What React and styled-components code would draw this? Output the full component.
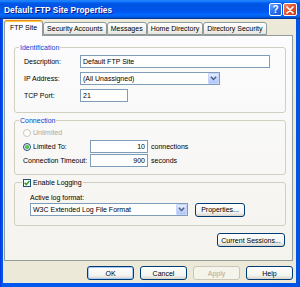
import React from 'react';
import styled, { createGlobalStyle } from 'styled-components';

const Global = createGlobalStyle`
  * { box-sizing: border-box; }
  html, body { margin: 0; padding: 0; width: 300px; height: 287px; overflow: hidden; background: #0054e3; }
  body { font-family: "Liberation Sans", Arial, sans-serif; font-size: 7px; color: #000; }
`;

const Window = styled.div`
  width: 300px;
  height: 287px;
  display: flex;
  flex-direction: column;
  background: linear-gradient(to right, #0831d9 0px, #0058ee 2px, #0054e3 100%);
`;

const TitleBar = styled.div`
  height: 19px;
  flex: none;
  display: flex;
  align-items: center;
  gap: 1px;
  padding: 0 3px 0 4px;
  background: linear-gradient(to bottom, #0058ee 0%, #3593ff 4%, #288eff 6%, #127dff 8%, #036ffc 10%, #0262ee 14%, #0057e5 20%, #0054e3 24%, #0055eb 56%, #005bf5 66%, #026afe 76%, #0062ef 86%, #0052d6 92%, #0040ab 94%, #003092 100%);
`;

const Title = styled.div`
  flex: 1;
  color: #fff;
  font-weight: bold;
  font-size: 8.3px;
  letter-spacing: 0.05px;
  text-shadow: 1px 1px 0 #0f1c8a;
`;

const CaptionButton = styled.div`
  width: ${p => p.$w}px;
  height: 13px;
  border: 1px solid #fff;
  border-radius: 2px;
  display: flex;
  align-items: center;
  justify-content: center;
  color: #fff;
  font-weight: bold;
  font-size: 10px;
  line-height: 1;
  background: ${p => p.$close
    ? 'linear-gradient(135deg, #f08a66 0%, #e2552d 45%, #c4391a 100%)'
    : 'linear-gradient(135deg, #6fa6ff 0%, #2a6ff0 50%, #1a52d8 100%)'};
`;

const Body = styled.div`
  flex: 1;
  margin: 0 4px 4px 3px;
  background: #ece9d8;
  padding: 1px 3px 0 1px;
  display: flex;
  flex-direction: column;
`;

const TabRow = styled.div`
  height: 15px;
  flex: none;
  display: flex;
  align-items: flex-end;
  position: relative;
  z-index: 1;
`;

const Tab = styled.div`
  height: ${p => (p.$active ? 16 : 13)}px;
  margin-bottom: ${p => (p.$active ? -1 : 0)}px;
  padding: 0 ${p => (p.$active ? 5 : 3)}px ${p => (p.$active ? 2 : 0)}px;
  border: 1px solid #919b9c;
  border-bottom: ${p => (p.$active ? 'none' : '1px solid #919b9c')};
  border-top-color: ${p => (p.$active ? '#e68b2c' : '#919b9c')};
  border-radius: 3px 3px 0 0;
  box-shadow: ${p => (p.$active ? 'inset 0 1px 0 #ffc83c' : 'none')};
  background: ${p => (p.$active ? '#fcfcfe' : 'linear-gradient(to bottom, #ffffff, #f3f3ef 60%, #e6e5df)')};
  display: flex;
  align-items: center;
  white-space: nowrap;
`;

const Panel = styled.div`
  height: 226px;
  flex: none;
  border: 1px solid #919b9c;
  background: linear-gradient(to bottom, #fcfcfe, #f4f3ee);
  padding: 7px 6px 0 9px;
  display: flex;
  flex-direction: column;
`;

const Group = styled.fieldset`
  margin: ${p => p.$mt}px 0 0;
  padding: 0;
  min-width: 0;
  border: 1px solid #d0d0bf;
  border-radius: 3px;
`;

const Legend = styled.legend`
  margin-left: ${p => p.$ml}px;
  padding: 0 1px;
  height: 9px;
  line-height: 9px;
  color: ${p => (p.$plain ? '#000' : '#0046d5')};
`;

const LegendInner = styled.span`
  display: inline-flex;
  align-items: center;
  gap: 2px;
  height: 9px;
`;

const GroupBody = styled.div`
  padding: ${p => p.$pad};
  display: flex;
  flex-direction: column;
  gap: ${p => p.$gap}px;
`;

const FieldRow = styled.div`
  height: ${p => p.$h || 13}px;
  display: flex;
  align-items: center;
  gap: ${p => p.$gap || 0}px;
`;

const FieldLabel = styled.div`
  width: ${p => p.$w}px;
  flex: none;
  display: flex;
  align-items: center;
  gap: 2px;
  color: ${p => (p.$disabled ? '#aca899' : '#000')};
  white-space: nowrap;
`;

const TextBox = styled.div`
  width: ${p => p.$w}px;
  height: 13px;
  flex: none;
  border: 1px solid #7f9db9;
  background: #fff;
  padding: 0 2px;
  line-height: 11px;
  text-align: ${p => (p.$right ? 'right' : 'left')};
  white-space: nowrap;
  overflow: hidden;
`;

const Combo = styled.div`
  width: ${p => p.$w}px;
  height: 13px;
  flex: none;
  border: 1px solid #7f9db9;
  background: #fff;
  display: flex;
  align-items: stretch;
`;

const ComboText = styled.div`
  flex: 1;
  padding: 0 2px;
  line-height: 11px;
  white-space: nowrap;
  overflow: hidden;
`;

const ComboButton = styled.div`
  width: 11px;
  flex: none;
  margin: 0;
  border: 1px solid #c3d3fd;
  border-radius: 1px;
  background: linear-gradient(to bottom, #e6eeff, #c1d3fb 60%, #b4c8f6);
  display: flex;
  align-items: center;
  justify-content: center;
`;

const Radio = styled.span`
  width: 8px;
  height: 8px;
  flex: none;
  border-radius: 50%;
  border: 1px solid ${p => (p.$disabled ? '#cac8bb' : '#1c5180')};
  background: ${p => (p.$disabled ? '#fff' : 'linear-gradient(135deg, #dcdcd7, #fff)')};
  display: flex;
  align-items: center;
  justify-content: center;
`;

const RadioDot = styled.span`
  width: 4px;
  height: 4px;
  border-radius: 50%;
  background: radial-gradient(circle at 35% 35%, #5fd35f, #21a121);
`;

const CheckBox = styled.span`
  width: 8px;
  height: 8px;
  flex: none;
  border: 1px solid #1c5180;
  background: #fff;
  display: flex;
  align-items: center;
  justify-content: center;
`;

const Suffix = styled.span`
  margin-left: 3px;
  white-space: nowrap;
`;

const Button = styled.div`
  width: ${p => p.$w}px;
  height: 14px;
  flex: none;
  border: 1px solid ${p => (p.$disabled ? '#c9c7ba' : '#003c74')};
  border-radius: 3px;
  background: ${p => (p.$disabled ? '#f5f4ea' : 'linear-gradient(to bottom, #ffffff, #f3f3ef 70%, #d8d4ca)')};
  color: ${p => (p.$disabled ? '#aca899' : '#000')};
  box-shadow: ${p => (p.$focus ? 'inset 0 0 0 1px #a9c8f5' : 'none')};
  display: flex;
  align-items: center;
  justify-content: center;
  white-space: nowrap;
`;

const Actions = styled.div`
  margin-top: ${p => p.$mt}px;
  display: flex;
  justify-content: flex-end;
  gap: ${p => p.$gap || 0}px;
  padding-right: ${p => p.$pr || 0}px;
`;

const ArrowDown = () => (
  <svg width="7" height="5" viewBox="0 0 7 5">
    <path d="M0.8 0.8 L3.5 3.5 L6.2 0.8" fill="none" stroke="#4d6185" strokeWidth="1.5" />
  </svg>
);

const CloseGlyph = () => (
  <svg width="8" height="8" viewBox="0 0 8 8">
    <path d="M1 1 L7 7 M7 1 L1 7" stroke="#fff" strokeWidth="1.7" strokeLinecap="round" />
  </svg>
);

const CheckGlyph = () => (
  <svg width="6" height="6" viewBox="0 0 6 6">
    <path d="M0.6 2.8 L2.3 4.6 L5.4 1" fill="none" stroke="#21a121" strokeWidth="1.4" />
  </svg>
);

const tabs = ['FTP Site', 'Security Accounts', 'Messages', 'Home Directory', 'Directory Security'];

export default function App() {
  return (
    <>
      <Global />
      <Window>
        <TitleBar>
          <Title>Default FTP Site Properties</Title>
          <CaptionButton $w={13}>?</CaptionButton>
          <CaptionButton $w={14} $close><CloseGlyph /></CaptionButton>
        </TitleBar>
        <Body>
          <TabRow>
            {tabs.map((t, i) => (
              <Tab key={t} $active={i === 0}>{t}</Tab>
            ))}
          </TabRow>
          <Panel>
            <Group $mt={0}>
              <Legend $ml={4}>Identification</Legend>
              <GroupBody $pad="3px 0 10px 9px" $gap={4}>
                <FieldRow>
                  <FieldLabel $w={56}>Description:</FieldLabel>
                  <TextBox $w={190}>Default FTP Site</TextBox>
                </FieldRow>
                <FieldRow>
                  <FieldLabel $w={56}>IP Address:</FieldLabel>
                  <Combo $w={140}>
                    <ComboText>(All Unassigned)</ComboText>
                    <ComboButton><ArrowDown /></ComboButton>
                  </Combo>
                </FieldRow>
                <FieldRow>
                  <FieldLabel $w={56}>TCP Port:</FieldLabel>
                  <TextBox $w={48}>21</TextBox>
                </FieldRow>
              </GroupBody>
            </Group>

            <Group $mt={3}>
              <Legend $ml={4}>Connection</Legend>
              <GroupBody $pad="1px 0 7px 8px" $gap={1}>
                <FieldRow>
                  <FieldLabel $w={67} $disabled>
                    <Radio $disabled />
                    Unlimited
                  </FieldLabel>
                </FieldRow>
                <FieldRow>
                  <FieldLabel $w={67}>
                    <Radio><RadioDot /></Radio>
                    Limited To:
                  </FieldLabel>
                  <TextBox $w={58} $right>10</TextBox>
                  <Suffix>connections</Suffix>
                </FieldRow>
                <FieldRow>
                  <FieldLabel $w={67}>Connection Timeout:</FieldLabel>
                  <TextBox $w={58} $right>900</TextBox>
                  <Suffix>seconds</Suffix>
                </FieldRow>
              </GroupBody>
            </Group>

            <Group $mt={3}>
              <Legend $ml={7} $plain>
                <LegendInner>
                  <CheckBox><CheckGlyph /></CheckBox>
                  Enable Logging
                </LegendInner>
              </Legend>
              <GroupBody $pad="5px 0 9px 15px" $gap={1}>
                <FieldRow $h={10}>Active log format:</FieldRow>
                <FieldRow $gap={7}>
                  <Combo $w={158}>
                    <ComboText>W3C Extended Log File Format</ComboText>
                    <ComboButton><ArrowDown /></ComboButton>
                  </Combo>
                  <Button $w={50}>Properties...</Button>
                </FieldRow>
              </GroupBody>
            </Group>

            <Actions $mt={7} $pr={1}>
              <Button $w={68}>Current Sessions...</Button>
            </Actions>
          </Panel>
          <Actions $mt={5} $gap={6}>
            <Button $w={47} $focus>OK</Button>
            <Button $w={47}>Cancel</Button>
            <Button $w={47} $disabled>Apply</Button>
            <Button $w={47}>Help</Button>
          </Actions>
        </Body>
      </Window>
    </>
  );
}
